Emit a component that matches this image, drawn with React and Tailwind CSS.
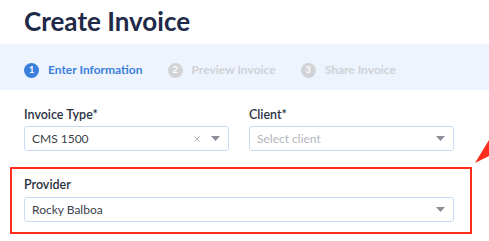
import { X } from "lucide-react";

const Caret = () => (
  <svg width="9" height="5" viewBox="0 0 9 5" className="shrink-0">
    <path d="M0 0 L9 0 L4.5 5 Z" fill="#8a8f99" />
  </svg>
);

const Step = ({ n, label, active }) => (
  <div className="flex items-center gap-[9px]">
    <span
      className={`flex h-[15px] w-[15px] items-center justify-center rounded-full text-[9px] font-bold text-white ${
        active ? "bg-[#3a7fdc]" : "bg-[#d2d3d6]"
      }`}
    >
      {n}
    </span>
    <span className={`text-[12px] font-bold ${active ? "text-[#3a7fdc]" : "text-[#cfd1d5]"}`}>{label}</span>
  </div>
);

const Select = ({ value, placeholder, clearable, className = "" }) => (
  <div
    className={`flex h-[25px] items-center rounded-[3px] border border-[#c9dbf3] bg-white pl-[7px] pr-[8px] ${className}`}
  >
    <span className={`flex-1 text-[12px] ${value ? "text-[#3a3f4a]" : "text-[#b3b7be]"}`}>
      {value || placeholder}
    </span>
    {clearable && <X className="mr-[9px] h-[10px] w-[10px] text-[#a7abb2]" strokeWidth={2} />}
    <Caret />
  </div>
);

export default function App() {
  return (
    <div
      className="relative h-[241px] w-[489px] overflow-hidden bg-white"
      style={{ fontFamily: "Lato, 'Open Sans', sans-serif" }}
    >
      <h1 className="h-[44px] pl-[24px] pt-[5px] text-[26px] font-bold leading-[32px] text-[#1e2a48]">
        Create Invoice
      </h1>

      <div className="flex h-[46px] items-center gap-[25px] bg-[#eef4fd] pl-[24px] pt-[6px]">
        <Step n="1" label="Enter Information" active />
        <Step n="2" label="Preview Invoice" />
        <Step n="3" label="Share Invoice" />
      </div>

      <div className="grid grid-cols-[205px_205px] gap-[20px] pl-[24px] pt-[18px]">
        <div>
          <div className="mb-[4px] text-[12.5px] font-semibold leading-[14px] text-[#2a3142]">Invoice Type*</div>
          <Select value="CMS 1500" clearable />
        </div>
        <div>
          <div className="mb-[4px] text-[12.5px] font-semibold leading-[14px] text-[#2a3142]">Client*</div>
          <Select placeholder="Select client" />
        </div>
      </div>

      <div className="ml-[10px] mt-[16px] w-[462px] border-2 border-[#ff2d1c] pb-[10px] pl-[12px] pr-[16px] pt-[9px]">
        <div className="mb-[5px] text-[12.5px] font-semibold leading-[14px] text-[#2a3142]">Provider</div>
        <Select value="Rocky Balboa" />
      </div>

      <svg className="absolute left-[474px] top-[139px]" width="15" height="25" viewBox="0 0 15 25">
        <path d="M1 24 L15 1 L15 17 Z" fill="#ff2d1c" />
      </svg>
    </div>
  );
}
